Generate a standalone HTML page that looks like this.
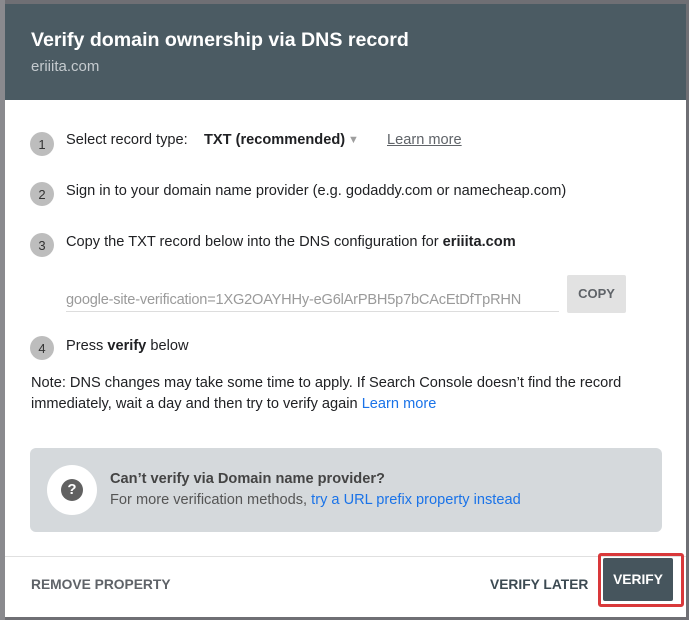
<!DOCTYPE html>
<html><head><style>
body{margin:0;width:689px;height:620px;background:#6f6f74;font-family:"Liberation Sans",sans-serif;position:relative;overflow:hidden}
.dlg{position:absolute;left:5px;top:4px;width:681px;height:613px;background:#fff}
.hdr{position:absolute;left:0;top:0;width:681px;height:96px;background:#4b5b63}
.a{position:absolute;white-space:nowrap;font-size:14.6px;color:#202124}
.n{position:absolute;width:24px;height:24px;border-radius:50%;background:#bdbdbd;color:#333;font-size:13px;text-align:center;line-height:26px}
</style></head><body>
<div style="position:absolute;left:0;top:0;width:5px;height:620px;background:#8a8a8e"></div>
<div class="dlg">
<div class="hdr"></div>
<div class="a" style="left:26px;top:25px;font-size:19.6px;font-weight:bold;color:#fff">Verify domain ownership via DNS record</div>
<div class="a" style="left:26px;top:54px;font-size:15px;color:#c5cbcf">eriiita.com</div>

<div class="n" style="left:25px;top:128px">1</div>
<div class="a" style="left:61px;top:128px">Select record type:</div>
<div class="a" style="left:199px;top:128px;font-weight:bold">TXT (recommended)</div>
<div class="a" style="left:343px;top:130px;color:#9e9e9e;font-size:11px">▼</div>
<div class="a" style="left:382px;top:128px;color:#5f6368;text-decoration:underline">Learn more</div>

<div class="n" style="left:25px;top:178px">2</div>
<div class="a" style="left:61px;top:179px">Sign in to your domain name provider (e.g. godaddy.com or namecheap.com)</div>

<div class="n" style="left:25px;top:229px">3</div>
<div class="a" style="left:61px;top:230px">Copy the TXT record below into the DNS configuration for <b>eriiita.com</b></div>

<div class="a" style="left:61px;top:288px;color:#9a9a9a;font-size:14.6px;letter-spacing:-0.2px">google-site-verification=1XG2OAYHHy-eG6lArPBH5p7bCAcEtDfTpRHN</div>
<div style="position:absolute;left:61px;top:307px;width:493px;height:1px;background:#ddd"></div>
<div style="position:absolute;left:562px;top:271px;width:59px;height:38px;background:#e2e2e2;border-radius:2px;color:#5f6368;font-size:13px;font-weight:bold;text-align:center;line-height:38px">COPY</div>

<div class="n" style="left:25px;top:332px">4</div>
<div class="a" style="left:61px;top:334px">Press <b>verify</b> below</div>

<div class="a" style="left:26px;top:369px;line-height:21px">Note: DNS changes may take some time to apply. If Search Console doesn’t find the record<br>immediately, wait a day and then try to verify again <span style="color:#1a73e8">Learn more</span></div>

<div style="position:absolute;left:25px;top:444px;width:632px;height:84px;background:#d5d9dc;border-radius:6px"></div>
<div style="position:absolute;left:42px;top:461px;width:50px;height:50px;border-radius:50%;background:#fff"></div>
<div style="position:absolute;left:56px;top:475px;width:22px;height:22px;border-radius:50%;background:#616161;color:#fff;font-weight:bold;font-size:15px;text-align:center;line-height:22px">?</div>
<div class="a" style="left:105px;top:467px;font-weight:bold;color:#444">Can’t verify via Domain name provider?</div>
<div class="a" style="left:105px;top:488px;color:#555">For more verification methods, <span style="color:#1a73e8">try a URL prefix property instead</span></div>

<div style="position:absolute;left:0;top:552px;width:681px;height:1px;background:#e0e0e0"></div>
<div class="a" style="left:26px;top:573px;color:#5f6368;font-weight:bold;font-size:13.8px">REMOVE PROPERTY</div>
<div class="a" style="left:485px;top:573px;color:#3c4a52;font-weight:bold;font-size:13.8px">VERIFY LATER</div>
<div style="position:absolute;left:593px;top:549px;width:86px;height:54px;border:3px solid #d9383a;border-radius:3px;box-sizing:border-box"></div>
<div style="position:absolute;left:598px;top:554px;width:70px;height:43px;background:#46555d;border-radius:2px;color:#fff;font-weight:bold;font-size:13.8px;text-align:center;line-height:43px">VERIFY</div>
</div>
</body></html>
